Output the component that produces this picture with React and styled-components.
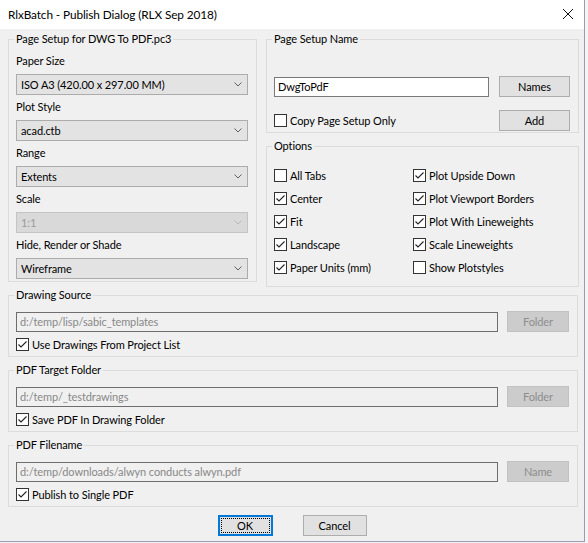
import React from 'react';
import styled, { createGlobalStyle } from 'styled-components';

const GlobalStyle = createGlobalStyle`
  html, body {
    margin: 0;
    padding: 0;
    background: #f4f4f4;
  }
  body {
    font-family: Lato, "Open Sans", sans-serif;
    font-size: 11px;
    letter-spacing: -0.1px;
    color: #000;
  }
  * {
    box-sizing: border-box;
  }
`;

const Window = styled.div`
  width: 585px;
  height: 542px;
  background: #f0f0f0;
  border-right: 1px solid #9b9bb2;
  border-bottom: 1px solid #9b9bb2;
  display: flex;
  flex-direction: column;
`;

const TitleBar = styled.div`
  height: 29px;
  background: #fff;
  display: flex;
  align-items: center;
  justify-content: space-between;
  padding: 0 10px 1px 8px;
  font-size: 11.8px;
  letter-spacing: -0.1px;
`;

const Body = styled.div`
  padding: 3px 6px 0 8px;
  display: flex;
  flex-direction: column;
`;

const TopRow = styled.div`
  display: grid;
  grid-template-columns: 249px 313px;
  column-gap: 9px;
  align-items: start;
`;

const Column = styled.div`
  display: flex;
  flex-direction: column;
  gap: 6px;
`;

const Group = styled.fieldset`
  margin: 0;
  min-width: 0;
  border: 1px solid #dcdcdc;
  padding: ${(p) => p.$pad || '3px 8px 2px 7px'};
`;

const Legend = styled.legend`
  padding: 0 2px;
  margin-left: -2px;
  line-height: 14px;
  height: 14px;
`;

const FieldLabel = styled.div`
  height: 25px;
  display: flex;
  align-items: center;
  padding-bottom: 2px;
`;

const Combo = styled.div`
  height: 21px;
  display: flex;
  align-items: center;
  justify-content: space-between;
  padding: 0 5px 1px 4px;
  border: 1px solid ${(p) => (p.$disabled ? '#c4c4c4' : '#acacac')};
  background: ${(p) => (p.$disabled ? '#d9d9d9' : '#e3e3e3')};
  color: ${(p) => (p.$disabled ? '#9a9a9a' : '#000')};
`;

const Chevron = ({ disabled }) => (
  <svg width="8" height="5" viewBox="0 0 8 5">
    <polyline
      points="0.5,0.5 4,4 7.5,0.5"
      fill="none"
      stroke={disabled ? '#b8b8b8' : '#606060'}
      strokeWidth="1"
    />
  </svg>
);

const TextBox = styled.div`
  height: 20px;
  display: flex;
  align-items: center;
  padding: 0 0 1px 3px;
  border: 1px solid ${(p) => (p.$disabled ? '#6e6e6e' : '#7a7a7a')};
  background: ${(p) => (p.$disabled ? '#f0f0f0' : '#fff')};
  color: ${(p) => (p.$disabled ? '#888' : '#000')};
  white-space: nowrap;
  overflow: hidden;
`;

const Button = styled.div`
  position: relative;
  height: 21px;
  width: ${(p) => p.$width || 'auto'};
  display: flex;
  align-items: center;
  justify-content: center;
  padding-bottom: 1px;
  border: 1px solid ${(p) => (p.$disabled ? '#c2c2c2' : p.$focus ? '#0078d7' : '#adadad')};
  box-shadow: ${(p) => (p.$focus ? 'inset 0 0 0 1px #0078d7' : 'none')};
  background: ${(p) => (p.$disabled ? '#cccccc' : '#e1e1e1')};
  color: ${(p) => (p.$disabled ? '#8c8c8c' : '#000')};
`;

const FocusRing = styled.span`
  position: absolute;
  inset: 2px;
  border: 1px dotted #000;
`;

const NameGrid = styled.div`
  display: grid;
  grid-template-columns: 1fr 71px;
  grid-template-rows: 21px 21px;
  column-gap: 10px;
  row-gap: 13px;
  align-items: center;
`;

const OptionsGrid = styled.div`
  display: grid;
  grid-template-columns: 139px 1fr;
  grid-auto-flow: column;
  grid-template-rows: repeat(5, 23px);
  align-items: center;
`;

const CheckRow = styled.label`
  display: flex;
  align-items: center;
  gap: 3px;
  height: ${(p) => p.$height || 'auto'};
  white-space: nowrap;
`;

const Box = styled.span`
  width: 13px;
  height: 13px;
  flex: none;
  border: 1px solid #333;
  background: #fff;
  display: flex;
`;

const Check = ({ checked, label, height }) => (
  <CheckRow $height={height}>
    <Box>
      {checked && (
        <svg width="11" height="11" viewBox="0 0 11 11">
          <polyline points="1.5,5.5 4,8 9.5,2.5" fill="none" stroke="#222" strokeWidth="1.1" />
        </svg>
      )}
    </Box>
    <span>{label}</span>
  </CheckRow>
);

const Stack = styled.div`
  display: flex;
  flex-direction: column;
  gap: 6px;
  margin-top: 1px;
`;

const PathRow = styled.div`
  display: grid;
  grid-template-columns: 1fr 62px;
  column-gap: 9px;
  align-items: end;
  height: 21px;
`;

const SourceBody = styled.div`
  display: flex;
  flex-direction: column;
  gap: 3px;
`;

const Footer = styled.div`
  display: flex;
  justify-content: center;
  gap: 30px;
  margin-top: 8px;
  padding-right: 2px;
`;

const CloseIcon = () => (
  <svg width="12" height="12" viewBox="0 0 12 12">
    <path d="M1 1 L11 11 M11 1 L1 11" stroke="#111" strokeWidth="1" />
  </svg>
);

const fields = [
  { label: 'Paper Size', value: 'ISO A3 (420.00 x 297.00 MM)' },
  { label: 'Plot Style', value: 'acad.ctb' },
  { label: 'Range', value: 'Extents' },
  { label: 'Scale', value: '1:1', disabled: true },
  { label: 'Hide, Render or Shade', value: 'Wireframe' },
];

const options = [
  ['All Tabs', false],
  ['Center', true],
  ['Fit', true],
  ['Landscape', true],
  ['Paper Units (mm)', true],
  ['Plot Upside Down', true],
  ['Plot Viewport Borders', true],
  ['Plot With Lineweights', true],
  ['Scale Lineweights', true],
  ['Show Plotstyles', false],
];

const sources = [
  {
    title: 'Drawing Source',
    path: 'd:/temp/lisp/sabic_templates',
    button: 'Folder',
    check: 'Use Drawings From Project List',
  },
  {
    title: 'PDF Target Folder',
    path: 'd:/temp/_testdrawings',
    button: 'Folder',
    check: 'Save PDF In Drawing Folder',
  },
  {
    title: 'PDF Filename',
    path: 'd:/temp/downloads/alwyn conducts alwyn.pdf',
    button: 'Name',
    check: 'Publish to Single PDF',
  },
];

const App = () => {
  return (
    <>
      <GlobalStyle />
      <Window>
        <TitleBar>
          <span>RlxBatch - Publish Dialog (RLX Sep 2018)</span>
          <CloseIcon />
        </TitleBar>
        <Body>
          <TopRow>
            <Group>
              <Legend>Page Setup for DWG To PDF.pc3</Legend>
              {fields.map((f) => (
                <div key={f.label}>
                  <FieldLabel>{f.label}</FieldLabel>
                  <Combo $disabled={f.disabled}>
                    <span>{f.value}</span>
                    <Chevron disabled={f.disabled} />
                  </Combo>
                </div>
              ))}
            </Group>
            <Column>
              <Group $pad="30px 8px 1px 7px">
                <Legend>Page Setup Name</Legend>
                <NameGrid>
                  <TextBox>DwgToPdF</TextBox>
                  <Button>Names</Button>
                  <Check label="Copy Page Setup Only" />
                  <Button>Add</Button>
                </NameGrid>
              </Group>
              <Group $pad="11px 8px 7px 7px">
                <Legend>Options</Legend>
                <OptionsGrid>
                  {options.map(([label, checked]) => (
                    <Check key={label} label={label} checked={checked} />
                  ))}
                </OptionsGrid>
              </Group>
            </Column>
          </TopRow>
          <Stack>
            {sources.map((s) => (
              <Group key={s.title} $pad="9px 8px 2px 7px">
                <Legend>{s.title}</Legend>
                <SourceBody>
                  <PathRow>
                    <TextBox $disabled>{s.path}</TextBox>
                    <Button $disabled>{s.button}</Button>
                  </PathRow>
                  <Check label={s.check} checked height="19px" />
                </SourceBody>
              </Group>
            ))}
          </Stack>
          <Footer>
            <Button $width="55px" $focus>
              <FocusRing />
              OK
            </Button>
            <Button $width="64px">Cancel</Button>
          </Footer>
        </Body>
      </Window>
    </>
  );
};

export default App;
